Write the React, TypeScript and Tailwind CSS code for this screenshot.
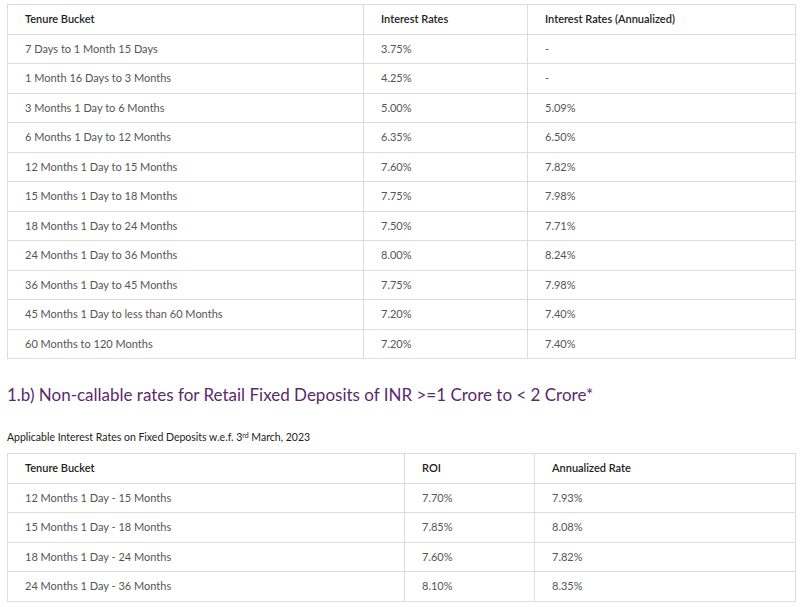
import React from "react";

const t1: [string, string, string][] = [
  ["7 Days to 1 Month 15 Days", "3.75%", "-"],
  ["1 Month 16 Days to 3 Months", "4.25%", "-"],
  ["3 Months 1 Day to 6 Months", "5.00%", "5.09%"],
  ["6 Months 1 Day to 12 Months", "6.35%", "6.50%"],
  ["12 Months 1 Day to 15 Months", "7.60%", "7.82%"],
  ["15 Months 1 Day to 18 Months", "7.75%", "7.98%"],
  ["18 Months 1 Day to 24 Months", "7.50%", "7.71%"],
  ["24 Months 1 Day to 36 Months", "8.00%", "8.24%"],
  ["36 Months 1 Day to 45 Months", "7.75%", "7.98%"],
  ["45 Months 1 Day to less than 60 Months", "7.20%", "7.40%"],
  ["60 Months to 120 Months", "7.20%", "7.40%"],
];
const t2: [string, string, string][] = [
  ["12 Months 1 Day - 15 Months", "7.70%", "7.93%"],
  ["15 Months 1 Day - 18 Months", "7.85%", "8.08%"],
  ["18 Months 1 Day - 24 Months", "7.60%", "7.82%"],
  ["24 Months 1 Day - 36 Months", "8.10%", "8.35%"],
];

function Table({ head, rows, cols }: { head: string[]; rows: [string, string, string][]; cols: string }) {
  const all = [head, ...rows];
  return (
    <div className="mx-[7px] w-[789px] border-t border-l border-[#dcdcdc]">
      {all.map((r, i) => (
        <div key={i} className={`grid ${cols} h-[29.5px]`}>
          {r.map((c, j) => (
            <div
              key={j}
              className={`flex items-center pl-[17px] border-r border-b border-[#dcdcdc] text-[11px] ${i === 0 ? "font-semibold text-[#222]" : "text-[#555]"}`}
            >
              {c}
            </div>
          ))}
        </div>
      ))}
    </div>
  );
}

export default function App() {
  return (
    <div className="bg-white w-[800px] h-[607px] overflow-hidden pt-[4px]" style={{ fontFamily: "Lato, 'Open Sans', sans-serif" }}>
      <Table head={["Tenure Bucket", "Interest Rates", "Interest Rates (Annualized)"]} rows={t1} cols="grid-cols-[356px_164px_1fr]" />
      <h2 className="mt-[24px] ml-[7px] text-[17px] text-[#5a2a6e] leading-[24px]">
        1.b) Non-callable rates for Retail Fixed Deposits of INR &gt;=1 Crore to &lt; 2 Crore*
      </h2>
      <p className="mt-[23px] ml-[7px] text-[10.5px] text-[#222] leading-[14px]">
        Applicable Interest Rates on Fixed Deposits w.e.f. 3<sup className="text-[7px]">rd</sup> March, 2023
      </p>
      <div className="mt-[9px]">
        <Table head={["Tenure Bucket", "ROI", "Annualized Rate"]} rows={t2} cols="grid-cols-[397px_130px_1fr]" />
      </div>
    </div>
  );
}
